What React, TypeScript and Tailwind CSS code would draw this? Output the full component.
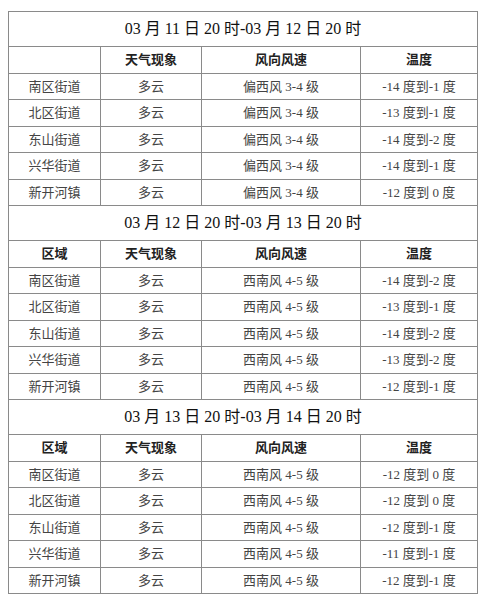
import React from 'react';

type Row = [string, string, string, string];

interface Section {
  title: string;
  firstHead: string;
  rows: Row[];
}

const sections: Section[] = [
  {
    title: '03 月 11 日 20 时-03 月 12 日 20 时',
    firstHead: '',
    rows: [
      ['南区街道', '多云', '偏西风 3-4 级', '-14 度到-1 度'],
      ['北区街道', '多云', '偏西风 3-4 级', '-13 度到-1 度'],
      ['东山街道', '多云', '偏西风 3-4 级', '-14 度到-2 度'],
      ['兴华街道', '多云', '偏西风 3-4 级', '-14 度到-1 度'],
      ['新开河镇', '多云', '偏西风 3-4 级', '-12 度到 0 度'],
    ],
  },
  {
    title: '03 月 12 日 20 时-03 月 13 日 20 时',
    firstHead: '区域',
    rows: [
      ['南区街道', '多云', '西南风 4-5 级', '-14 度到-2 度'],
      ['北区街道', '多云', '西南风 4-5 级', '-13 度到-1 度'],
      ['东山街道', '多云', '西南风 4-5 级', '-14 度到-2 度'],
      ['兴华街道', '多云', '西南风 4-5 级', '-13 度到-2 度'],
      ['新开河镇', '多云', '西南风 4-5 级', '-12 度到-1 度'],
    ],
  },
  {
    title: '03 月 13 日 20 时-03 月 14 日 20 时',
    firstHead: '区域',
    rows: [
      ['南区街道', '多云', '西南风 4-5 级', '-12 度到 0 度'],
      ['北区街道', '多云', '西南风 4-5 级', '-12 度到 0 度'],
      ['东山街道', '多云', '西南风 4-5 级', '-12 度到-1 度'],
      ['兴华街道', '多云', '西南风 4-5 级', '-11 度到-1 度'],
      ['新开河镇', '多云', '西南风 4-5 级', '-12 度到-1 度'],
    ],
  },
];

const cell = 'border border-[#8a8a8a] text-center p-0';

export default function App() {
  return (
    <div className="w-[500px] h-[604px] bg-white pt-[11px] pl-[8px] font-['Liberation_Serif','Noto_Sans_CJK_SC',serif]">
      <table className="w-[469px] border-collapse table-fixed">
        <colgroup>
          <col className="w-[92px]" />
          <col className="w-[101px]" />
          <col className="w-[159px]" />
          <col className="w-[117px]" />
        </colgroup>
        <tbody>
          {sections.map((s) => (
            <React.Fragment key={s.title}>
              {/* period title */}
              <tr className="h-[35px]">
                <td colSpan={4} className={`${cell} text-[16px] text-[#111]`}>
                  {s.title}
                </td>
              </tr>
              <tr className="h-[26.5px] text-[13px] font-bold text-[#222]">
                <td className={cell}>{s.firstHead}</td>
                <td className={cell}>天气现象</td>
                <td className={cell}>风向风速</td>
                <td className={cell}>温度</td>
              </tr>
              {s.rows.map((r) => (
                <tr key={r[0]} className="h-[26.5px] text-[13px] text-[#444]">
                  {r.map((v, i) => (
                    <td key={i} className={cell}>
                      {v}
                    </td>
                  ))}
                </tr>
              ))}
            </React.Fragment>
          ))}
        </tbody>
      </table>
    </div>
  );
}
